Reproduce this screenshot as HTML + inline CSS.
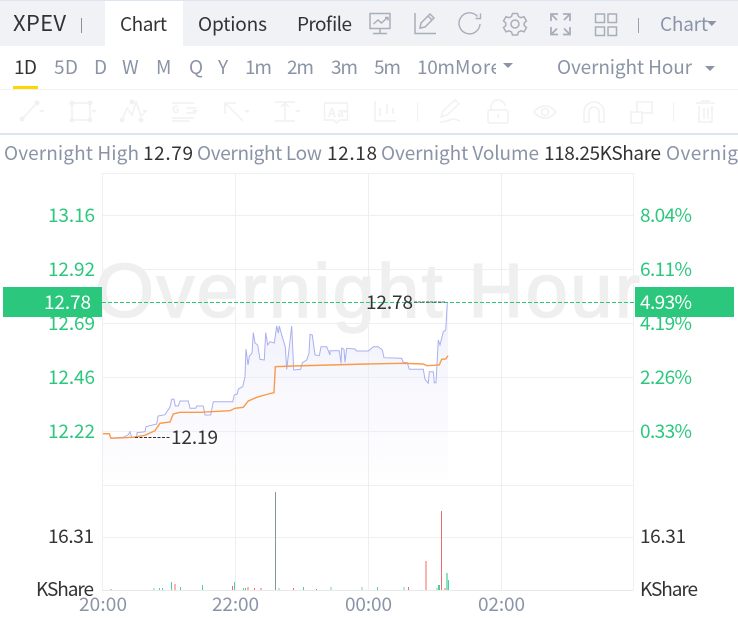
<!DOCTYPE html>
<html><head><meta charset="utf-8">
<style>
html,body{margin:0;padding:0;background:#fff;width:738px;height:618px;overflow:hidden}
svg{display:block}
text{font-family:"Noto Sans CJK SC","Liberation Sans",sans-serif;font-size:19px;fill:#8a94a6}
.d{fill:#333}
.g{fill:#2bc77d}
.w{fill:#fff}
.ic{fill:none;stroke:#a9afba;stroke-width:1.5}
.tb{fill:none;stroke:#f0f1f4;stroke-width:1.5}
.tf{fill:#f0f1f4;stroke:none}
</style></head><body>
<svg width="738" height="618" viewBox="0 0 738 618" xmlns="http://www.w3.org/2000/svg">
<rect x="0" y="0" width="738" height="46" fill="#f0f2f5"/>
<rect x="0" y="0" width="738" height="1" fill="#dde5f0"/>
<rect x="105" y="1" width="78" height="45" fill="#fff"/>
<text x="13" y="31" style="font-size:22px" class="d" textLength="53">XPEV</text>
<rect x="81" y="18" width="1" height="15" fill="#8a8f99"/>
<text x="120" y="31" class="d" textLength="47">Chart</text>
<text x="198" y="31" class="d" textLength="69">Options</text>
<text x="297" y="31" class="d" textLength="55">Profile</text>
<!-- header icons -->
<g class="ic">
<path d="M370 13.500h20v15h-20z M380 28.500v5 M373 33.500h14 M373.500 24l4.500-4 3.500 3 6-5.500 M385 17.500h3v3"/>
<path d="M415 13v20.500h21 M420 28l1-5 9-9 4 4-9 9z M428 16l4 4"/>
<path d="M477.500 16.500A10.500 10.500 0 1 0 480 24 M480.500 13.500v5h-5" stroke-width="1.400"/>
<path d="M512.500 13.500h5l1 3 2.500 1.200 3-1 2.500 4.300-2.300 2 0 2.500 2.300 2-2.500 4.300-3-1-2.500 1.200-1 3h-5l-1-3-2.500-1.200-3 1-2.500-4.300 2.300-2 0-2.500-2.300-2 2.500-4.300 3 1 2.500-1.200z"/>
<circle cx="515" cy="24" r="4"/>
<rect x="595.500" y="14" width="9" height="8.500"/><rect x="608" y="14" width="8.500" height="8.500"/>
<rect x="595.500" y="27" width="9" height="8.500"/><rect x="608" y="27" width="8.500" height="8.500"/>
<path d="M551 21v-7h7 M551 14l6 6 M570 21v-7h-7 M570 14l-6 6 M551 27v7.500h7 M551 34.500l6-6 M570 27v7.500h-7 M570 34.500l-6-6" stroke-width="1.800"/>
</g>
<rect x="638" y="18" width="1" height="15" fill="#9aa1ad"/>
<text x="660" y="31" textLength="48">Chart</text>
<path d="M707 21h9.500l-4.700 5z" fill="#8a94a6"/>

<!-- period row -->
<text x="14" y="74" class="d" textLength="23">1D</text>
<text x="54" y="74" textLength="24">5D</text>
<text x="94" y="74" textLength="12">D</text>
<text x="122" y="74" textLength="18">W</text>
<text x="156" y="74" textLength="16">M</text>
<text x="189" y="74" textLength="14">Q</text>
<text x="218" y="74" textLength="11">Y</text>
<text x="245" y="74" textLength="27">1m</text>
<text x="287" y="74" textLength="27">2m</text>
<text x="331" y="74" textLength="27">3m</text>
<text x="374" y="74" textLength="27">5m</text>
<text x="417" y="74" textLength="38">10m</text>
<svg x="455" y="50" width="41" height="35"><text x="0" y="24" textLength="46">More</text></svg>
<path d="M503 63h10l-5 5z" fill="#8a94a6"/>
<text x="557" y="74" textLength="135">Overnight Hour</text>
<path d="M705 66h10l-5 5z" fill="#8a94a6"/>
<rect x="13" y="86" width="25" height="3" fill="#fad800"/>
<rect x="0" y="89" width="738" height="1" fill="#eff1f4"/>

<!-- toolbar -->
<g class="tb">
<path d="M22 119l15-16"/>
<rect x="72" y="103" width="18" height="17"/>
<path d="M122 120l5-12 5 7 4-13 5 14 5-5"/>
<path d="M172 103h22 M186 108h10 M186 113h10 M172 118h22 M172 121h18"/>
<path d="M225 103l18 18 M225 103v11 M225 103h11"/>
<path d="M275 102h20 M275 121h20 M285 102v19 M281 107l4-4 4 4"/>
<path d="M324.500 103h23v17h-8l-3 3-3-3h-9z"/>
<path d="M375 101v20h21 M380 108v8 M387 104v10 M393 108v6"/>
<path d="M441 117l2-6 12-11 4 4-12 11z M440 122c8 0 10-3 14-3 2 0 3 1 6 2"/>
<rect x="488" y="110" width="20" height="13" rx="2"/>
<path d="M491 110v-2a7 7 0 0 1 14-2 M498 114v4"/>
<path d="M534 112c6-8 16-8 22 0-6 8-16 8-22 0z"/>
<circle cx="545" cy="112" r="3.500"/>
<path d="M584 122v-10a10 10 0 0 1 20 0v10h-5v-10a5 5 0 0 0-10 0v10z"/>
<path d="M631 112h11v11h-11z M637 112v-10h15v11h-10"/>
<path d="M696 103h19 M701 101h9 M699 106v16h13v-16 M704 108v11 M708 108v11"/>
</g>
<g class="tf">
<circle cx="22" cy="119" r="2.500"/><circle cx="37" cy="103" r="2.500"/><path d="M39 110h6l-3 3z"/>
<circle cx="72" cy="103" r="2.500"/><circle cx="90" cy="103" r="2.500"/><circle cx="72" cy="120" r="2.500"/><circle cx="90" cy="120" r="2.500"/><path d="M91 110h6l-3 3z"/>
<circle cx="122" cy="120" r="2.500"/><circle cx="132" cy="102" r="2.500"/><circle cx="141" cy="120" r="2.500"/><path d="M142 110h6l-3 3z"/>
<path d="M192 110h6l-3 3z M244 110h6l-3 3z M295 110h6l-3 3z M342 110h6l-3 3z"/>
<rect x="417" y="102" width="1" height="20"/><rect x="673" y="102" width="1" height="20"/>
</g>
<text x="172" y="113" style="font-size:10px;fill:#f0f1f4;font-weight:700" textLength="9">G</text>
<text x="328" y="117" style="font-size:12px;fill:#f0f1f4;font-weight:700" textLength="16">Aa</text>
<rect x="0" y="133" width="738" height="2" fill="#dce5f0"/>

<!-- info -->
<text x="4" y="160" textLength="135">Overnight High</text>
<text x="143" y="160" class="d" textLength="50">12.79</text>
<text x="197" y="160" textLength="125">Overnight Low</text>
<text x="327" y="160" class="d" textLength="50">12.18</text>
<text x="381" y="160" textLength="158">Overnight Volume</text>
<text x="544" y="160" class="d" textLength="117">118.25KShare</text>
<text x="666" y="160" textLength="72">Overnig</text>

<!-- watermark -->
<text x="95" y="317" style="font-size:76px;fill:#efefef;stroke:#efefef;stroke-width:1.500px;font-family:'Liberation Sans',sans-serif" textLength="545">Overnight Hour</text>

<!-- grid -->
<g stroke="#eeeff2" stroke-width="1" fill="none">
<path d="M102.500 173.500H633.500 M102.500 215.500H633.500 M102.500 269.500H633.500 M102.500 323.500H633.500 M102.500 377.500H633.500 M102.500 431.500H633.500 M102.500 485.500H633.500 M102.500 537.500H633.500"/>
<path d="M102.500 173.500V590 M235.500 173.500V590 M368.500 173.500V590 M501.500 173.500V590 M633.500 173.500V590"/>
</g>
<rect x="102" y="590" width="531" height="1" fill="#e6e8ec"/>

<defs><linearGradient id="f" x1="0" y1="0" x2="0" y2="1"><stop offset="0" stop-color="#e4e4f8" stop-opacity=".6"/><stop offset="1" stop-color="#f2f2fc" stop-opacity=".1"/></linearGradient></defs>
<path fill="url(#f)" d="M103 433.700L109.300 433.700 111 438 123.300 437.300 128 435 130 431.700 131.700 437.300 136.700 437 137 432.700 145 431.700 146 426.700 156.700 424 158 416 165 414.700 170 407 171.700 399.300 174 399.300 175.300 406 178.300 406 180 401 188.300 401 190 408.300 195.700 408.300 196.700 406 203.300 406 205 415 210.700 415 213.300 401.700 232.700 401.700 234.300 395 237.300 394 238.300 389 242.700 386.700 245 376.700 246 349 248 365 249.300 356 252 353.300 253.300 332.700 255 343 257.700 345 260 359.300 264.300 360 265.700 332.700 267.700 345 270 341.700 274.300 343 276.700 326 278.300 333 279.300 326 281.700 335 285.300 346.700 286.700 369.300 291.700 326 293.700 370 300.700 369.300 302.300 362.700 306.700 360 309 353.300 310 334.300 312.300 335 315 355 319.300 355.700 321 346.700 326.700 346.700 330 355 330 350.700 339.300 350.700 341 363.300 341.700 348 344 349.300 345 362.300 346.700 348.300 355 349 356.700 351 368.300 351 373.300 346.700 378.300 346.700 382.300 350 384 357.700 401.700 358.300 403.300 362.300 407.300 362.700 409.300 369.300 423.300 369.300 425 379.300 428.300 383.300 429.300 371.700 433.300 371.700 434.300 382.700 436 382.700 438.300 340 440 345 443.300 331.700 445.700 330 447.300 302.700 448 302.700 448 480 103 480Z"/>
<polyline fill="none" stroke="#aab0ee" stroke-width="1" points="103,433.700 109.300,433.700 111,438 123.300,437.300 128,435 130,431.700 131.700,437.300 136.700,437 137,432.700 145,431.700 146,426.700 156.700,424 158,416 165,414.700 170,407 171.700,399.300 174,399.300 175.300,406 178.300,406 180,401 188.300,401 190,408.300 195.700,408.300 196.700,406 203.300,406 205,415 210.700,415 213.300,401.700 232.700,401.700 234.300,395 237.300,394 238.300,389 242.700,386.700 245,376.700 246,349 248,365 249.300,356 252,353.300 253.300,332.700 255,343 257.700,345 260,359.300 264.300,360 265.700,332.700 267.700,345 270,341.700 274.300,343 276.700,326 278.300,333 279.300,326 281.700,335 285.300,346.700 286.700,369.300 291.700,326 293.700,370 300.700,369.300 302.300,362.700 306.700,360 309,353.300 310,334.300 312.300,335 315,355 319.300,355.700 321,346.700 326.700,346.700 330,355 330,350.700 339.300,350.700 341,363.300 341.700,348 344,349.300 345,362.300 346.700,348.300 355,349 356.700,351 368.300,351 373.300,346.700 378.300,346.700 382.300,350 384,357.700 401.700,358.300 403.300,362.300 407.300,362.700 409.300,369.300 423.300,369.300 425,379.300 428.300,383.300 429.300,371.700 433.300,371.700 434.300,382.700 436,382.700 438.300,340 440,345 443.300,331.700 445.700,330 447.300,302.700"/>
<polyline fill="none" stroke="#f99a4a" stroke-width="1.400" points="103,433.700 109.300,433.700 111,438.300 133.300,437.300 145,435.300 155,430.700 160,423.300 170,422 173.300,414 180,412.300 200,412.300 230,410.700 235,408.300 243.300,407.300 248.300,401 256.700,397.300 268.300,394 274,392.700 275.300,366.700 293,366 366.700,364 403,363.300 423,364 427,365.700 439.300,365 441.700,359.300 445.700,359 448,355.700"/>

<!-- volume bars -->
<g>
<g fill="#4fcf95">
<rect x="275" y="492" width="1" height="98" fill="#7f9c8f"/>
<rect x="171" y="582" width="1" height="8"/><rect x="159" y="588" width="1" height="2"/><rect x="162" y="588" width="1" height="2"/>
<rect x="180" y="587" width="1" height="3"/><rect x="202" y="585" width="1" height="5"/><rect x="234" y="582" width="1" height="8"/>
<rect x="243" y="588" width="1" height="2"/><rect x="245" y="588" width="1" height="2"/><rect x="303" y="587" width="1" height="3"/>
<rect x="377" y="587" width="1" height="3"/><rect x="438" y="585" width="2" height="5"/><rect x="448" y="580" width="1" height="10"/>
</g>
<g fill="#b6ecd3">
<rect x="153" y="588" width="2" height="2"/><rect x="278" y="588" width="2" height="2"/><rect x="330" y="587" width="2" height="3"/>
<rect x="361" y="587" width="2" height="3"/><rect x="403" y="587" width="2" height="3"/><rect x="436" y="588" width="2" height="2"/><rect x="446" y="573" width="2" height="17" fill="#8ee2bb"/>
</g>
<g fill="#fbb3b3">
<rect x="110" y="589" width="2" height="1"/><rect x="174" y="584" width="2" height="6"/><rect x="247" y="587" width="2" height="3"/>
<rect x="260" y="588" width="2" height="2"/><rect x="425" y="561" width="2" height="29"/><rect x="444" y="588" width="2" height="2"/>
</g>
<g fill="#ec6a6a">
<rect x="232" y="586" width="1" height="4"/><rect x="254" y="588" width="1" height="2"/><rect x="293" y="588" width="1" height="2"/>
<rect x="316" y="589" width="1" height="1"/><rect x="408" y="587" width="1" height="3"/><rect x="441" y="511" width="1" height="79"/>
</g>
</g>

<!-- axis labels -->
<text x="48" y="222" class="g" textLength="47">13.16</text>
<text x="48" y="276" class="g" textLength="47">12.92</text>
<text x="48" y="330" class="g" textLength="47">12.69</text>
<text x="48" y="384" class="g" textLength="47">12.46</text>
<text x="48" y="438" class="g" textLength="47">12.22</text>
<text x="640" y="222" class="g" textLength="52">8.04%</text>
<text x="640" y="276" class="g" textLength="52">6.11%</text>
<text x="640" y="330" class="g" textLength="52">4.19%</text>
<text x="640" y="384" class="g" textLength="52">2.26%</text>
<text x="640" y="438" class="g" textLength="52">0.33%</text>

<rect x="3" y="287" width="99" height="30" fill="#2bc77d"/>
<rect x="635" y="287" width="99" height="30" fill="#2bc77d"/>
<text x="44" y="309" class="w" textLength="47">12.78</text>
<text x="640" y="309" class="w" textLength="52">4.93%</text>
<line x1="102" y1="302.500" x2="635" y2="302.500" stroke="#2bc77d" stroke-width="1" stroke-dasharray="4 2"/>

<text x="366" y="309" class="d" textLength="47">12.78</text>
<line x1="414" y1="302" x2="446" y2="302" stroke="#333" stroke-width=".7" stroke-dasharray="3 1"/>
<text x="171" y="444" class="d" textLength="47">12.19</text>
<line x1="135" y1="437.500" x2="171" y2="437.500" stroke="#333" stroke-width="1" stroke-dasharray="3 1.500"/>

<text x="48" y="543" class="d" textLength="46">16.31</text>
<text x="640" y="543" class="d" textLength="46">16.31</text>
<text x="36" y="596" class="d" textLength="58">KShare</text>
<text x="640" y="596" class="d" textLength="58">KShare</text>

<text x="79" y="611" textLength="48">20:00</text>
<text x="212" y="611" textLength="47">22:00</text>
<text x="345" y="611" textLength="47">00:00</text>
<text x="478" y="611" textLength="47">02:00</text>
</svg>
</body></html>
